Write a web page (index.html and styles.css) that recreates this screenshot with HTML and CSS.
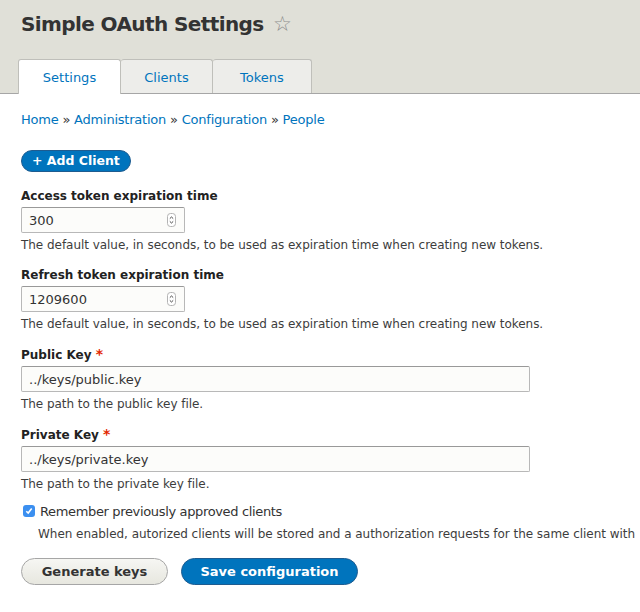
FILE: index.html
```html
<!DOCTYPE html>
<html>
<head>
<meta charset="utf-8">
<link rel="stylesheet" href="styles.css">
</head>
<body>
<header class="header">
  <h1 class="title">Simple OAuth Settings <span class="star">☆</span></h1>
  <nav class="tabs">
    <a class="tab active">Settings</a>
    <a class="tab">Clients</a>
    <a class="tab">Tokens</a>
  </nav>
</header>
<main class="content">
  <div class="breadcrumb"><a>Home</a> » <a>Administration</a> » <a>Configuration</a> » <a>People</a></div>
  <a class="action-btn">+ Add Client</a>

  <div class="field first">
    <label class="label">Access token expiration time</label>
    <div class="input number"><span class="value">300</span><span class="spin"><svg width="9" height="14" viewBox="0 0 9 14"><rect x="0.5" y="0.5" width="8" height="13" rx="3" fill="#fff" stroke="#b3b3b3"/><path d="M2.8 5.6 L4.5 4 L6.2 5.6" fill="none" stroke="#444" stroke-width="1"/><path d="M2.8 8.4 L4.5 10 L6.2 8.4" fill="none" stroke="#444" stroke-width="1"/></svg></span></div>
    <div class="description">The default value, in seconds, to be used as expiration time when creating new tokens.</div>
  </div>

  <div class="field">
    <label class="label">Refresh token expiration time</label>
    <div class="input number"><span class="value">1209600</span><span class="spin"><svg width="9" height="14" viewBox="0 0 9 14"><rect x="0.5" y="0.5" width="8" height="13" rx="3" fill="#fff" stroke="#b3b3b3"/><path d="M2.8 5.6 L4.5 4 L6.2 5.6" fill="none" stroke="#444" stroke-width="1"/><path d="M2.8 8.4 L4.5 10 L6.2 8.4" fill="none" stroke="#444" stroke-width="1"/></svg></span></div>
    <div class="description">The default value, in seconds, to be used as expiration time when creating new tokens.</div>
  </div>

  <div class="field">
    <label class="label">Public Key <span class="req">*</span></label>
    <div class="input wide"><span class="value">../keys/public.key</span></div>
    <div class="description">The path to the public key file.</div>
  </div>

  <div class="field">
    <label class="label">Private Key <span class="req">*</span></label>
    <div class="input wide"><span class="value">../keys/private.key</span></div>
    <div class="description">The path to the private key file.</div>
  </div>

  <div class="check-field">
    <div class="check-row"><span class="checkbox"><svg width="8" height="8" viewBox="0 0 8 8"><path d="M1.3 4.2 L3.2 6.1 L6.7 1.6" fill="none" stroke="#fff" stroke-width="1.6"/></svg></span><span class="check-label">Remember previously approved clients</span></div>
    <div class="description check-desc">When enabled, autorized clients will be stored and a authorization requests for the same client with</div>
  </div>

  <div class="actions">
    <a class="btn">Generate keys</a>
    <a class="btn primary">Save configuration</a>
  </div>
</main>
</body>
</html>
```
FILE: styles.css
```css
html, body {
  margin: 0;
  padding: 0;
  background: #fff;
  font-family: "DejaVu Sans", "Liberation Sans", sans-serif;
  color: #333;
  overflow: hidden;
}
.header {
  background: #e0e0d8;
  border-bottom: 1px solid #a6a6a6;
  padding: 11px 0 0 18px;
  height: 82px;
  box-sizing: content-box;
  display: flex;
  flex-direction: column;
}
.title {
  margin: 0 0 0 3px;
  font-size: 20px;
  font-weight: bold;
  color: #333;
  letter-spacing: -0.6px;
  line-height: 26px;
  height: 26px;
}
.star {
  font-weight: normal;
  color: #8d8d8d;
  font-size: 21px;
  margin-left: 3px;
  letter-spacing: 0;
}
.tabs {
  display: flex;
  margin-top: auto;
}
.tab {
  height: 33px;
  line-height: 35px;
  text-align: center;
  background: #ededea;
  border: 1px solid #bfbfba;
  border-bottom: none;
  border-left: none;
  border-radius: 3px 3px 0 0;
  color: #0074bd;
  font-size: 13px;
}
.tab:nth-child(1) { width: 101px; border-left: 1px solid #bfbfba; }
.tab:nth-child(2) { width: 91px; }
.tab:nth-child(3) { width: 98px; }
.tab.active {
  background: #fff;
  height: 34px;
  margin-bottom: -1px;
  border-color: #bfbfba;
}
.content {
  padding: 0 0 0 21px;
}
.breadcrumb {
  margin-top: 17px;
  font-size: 13px;
  line-height: 18px;
  letter-spacing: -0.22px;
  color: #333;
}
.breadcrumb a { color: #0074bd; }
.action-btn {
  display: inline-block;
  margin-top: 21px;
  height: 22px;
  line-height: 20px;
  padding: 0 10px 0 10px;
  background: #0074bd;
  border: 1px solid #1e5c90;
  box-sizing: border-box;
  border-radius: 11px;
  color: #fff;
  font-weight: bold;
  font-size: 12.5px;
}
.field { margin-top: 12px; }
.field.first { margin-top: 15px; }
.label {
  display: block;
  font-weight: bold;
  font-size: 12px;
  line-height: 18px;
  color: #222;
  margin-bottom: 2px;
}
.req { color: #e32700; font-size: 14px; }
.input {
  display: flex;
  align-items: center;
  box-sizing: border-box;
  height: 26px;
  border: 1px solid #b8b8b8;
  border-top-color: #999;
  border-radius: 2px;
  background: #fcfcfa;
  padding: 0 8px 0 7px;
  font-size: 13px;
  color: #333;
}
.input.number { width: 164px; }
.input.wide { width: 509px; }
.input .value { flex: 1; }
.spin { display: flex; }
.description {
  font-size: 12px;
  letter-spacing: -0.04px;
  line-height: 18px;
  color: #3d3d3d;
  margin-top: 3px;
  white-space: nowrap;
}
.check-field { margin-top: 9px; }
.check-row { display: flex; align-items: center; height: 18px; }
.checkbox {
  width: 12px;
  height: 12px;
  border-radius: 3px;
  background: #3b8ff0;
  margin: 0 5px 0 2px;
  display: flex;
  align-items: center;
  justify-content: center;
}
.check-label { font-size: 13px; letter-spacing: -0.35px; color: #333; }
.check-desc { margin: 5px 0 0 17px; }
.actions {
  display: flex;
  gap: 13px;
  margin-top: 15px;
}
.btn {
  display: inline-block;
  box-sizing: border-box;
  height: 27px;
  line-height: 25px;
  border-radius: 14px;
  border: 1px solid #a6a6a6;
  background: linear-gradient(#f6f6f3, #e7e7df);
  color: #333;
  font-weight: bold;
  font-size: 13px;
  padding: 0 20px;
}
.btn:first-child { width: 147px; text-align: center; padding: 0; }
.btn.primary {
  width: 177px;
  text-align: center;
  padding: 0;
  background: #0074bd;
  border-color: #1e5c90;
  color: #fff;
}
```
